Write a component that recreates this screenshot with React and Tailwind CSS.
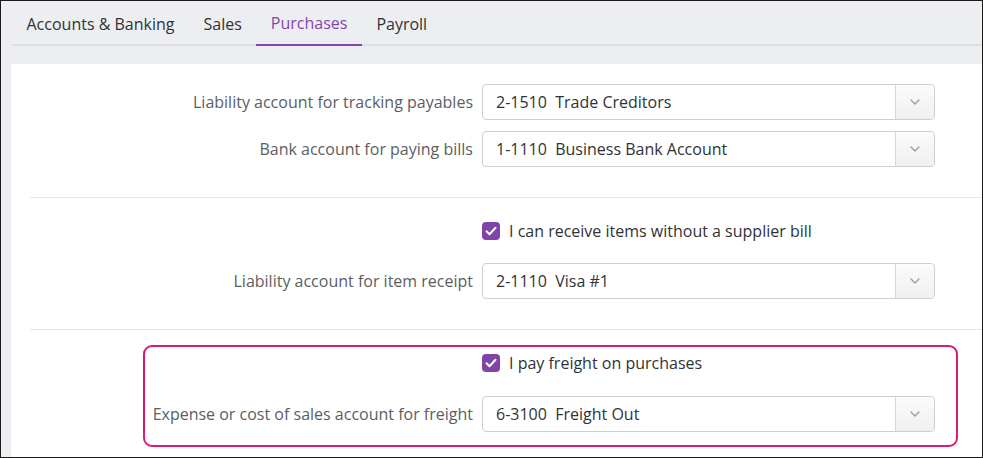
import React from 'react';

const tabs = ['Accounts & Banking', 'Sales', 'Purchases', 'Payroll'];

const Chevron = () => (
  <svg width="10" height="6" viewBox="0 0 10 6" fill="none">
    <path d="M1 1l4 4 4-4" stroke="#9a9a9a" strokeWidth="1.2" strokeLinecap="round" strokeLinejoin="round" />
  </svg>
);

const Select = ({ value }) => (
  <div className="flex h-[36px] w-[453px] items-stretch rounded-[4px] border border-[#cfcfcf] bg-white">
    <div className="flex flex-1 items-center whitespace-pre pl-[13px] text-[#303335]">{value}</div>
    <div className="flex w-[39px] items-center justify-center rounded-r-[4px] border-l border-[#d6d6d6] bg-gradient-to-b from-[#fbfbfb] to-[#f0f0f0]">
      <Chevron />
    </div>
  </div>
);

const Check = ({ label }) => (
  <div className="flex h-[24px] items-center">
    <div className="flex h-[18px] w-[18px] items-center justify-center rounded-[4px] bg-[#8043a8]">
      <svg width="12" height="10" viewBox="0 0 12 10" fill="none">
        <path d="M1.5 5.2l3 3 6-6.5" stroke="white" strokeWidth="2" strokeLinecap="round" strokeLinejoin="round" />
      </svg>
    </div>
    <span className="ml-[9px] text-[#303335]">{label}</span>
  </div>
);

const Row = ({ label, value, labelW = 'w-[462px]' }) => (
  <div className="flex items-center">
    <div className={`${labelW} text-right text-[#5b5e61]`}>{label}</div>
    <div className="ml-[9px]">
      <Select value={value} />
    </div>
  </div>
);

export default function App() {
  return (
    <div className="h-[458px] w-[983px] overflow-hidden border border-[#1a1a1a] bg-[#eceef1] font-['Open_Sans',sans-serif] text-[16px] leading-[24px]">
      {/* Tabs */}
      <div className="ml-[11px] flex h-[45px] border-b-2 border-[#dcdee1]">
        {tabs.map((t) => (
          <div
            key={t}
            className={`-mb-[2px] flex items-center px-[14.5px] ${
              t === 'Purchases' ? 'border-b-2 border-[#8546ac] text-[#8546ac]' : 'text-[#303335]'
            }`}
          >
            {t}
          </div>
        ))}
      </div>

      {/* Card */}
      <div className="ml-[10px] mt-[18px] h-[400px] bg-white pt-[20px]">
        <div className="flex flex-col gap-[11px]">
          <Row label="Liability account for tracking payables" value="2-1510  Trade Creditors" />
          <Row label="Bank account for paying bills" value="1-1110  Business Bank Account" />
        </div>

        <div className="ml-[19px] mt-[30px] border-t border-[#e6e7e9]" />

        <div className="pl-[471px] pt-[21px]">
          <Check label="I can receive items without a supplier bill" />
        </div>
        <div className="mt-[20px]">
          <Row label="Liability account for item receipt" value="2-1110  Visa #1" />
        </div>

        <div className="ml-[19px] mt-[30px] border-t border-[#e6e7e9]" />

        {/* Highlighted section */}
        <div className="ml-[132px] mt-[15px] w-[815px] rounded-[9px] border-2 border-[#d81a72] pb-[13px] pt-[4px]">
          <div className="pl-[337px]">
            <Check label="I pay freight on purchases" />
          </div>
          <div className="mt-[21px]">
            <Row labelW="w-[328px]" label="Expense or cost of sales account for freight" value="6-3100  Freight Out" />
          </div>
        </div>
      </div>
    </div>
  );
}
